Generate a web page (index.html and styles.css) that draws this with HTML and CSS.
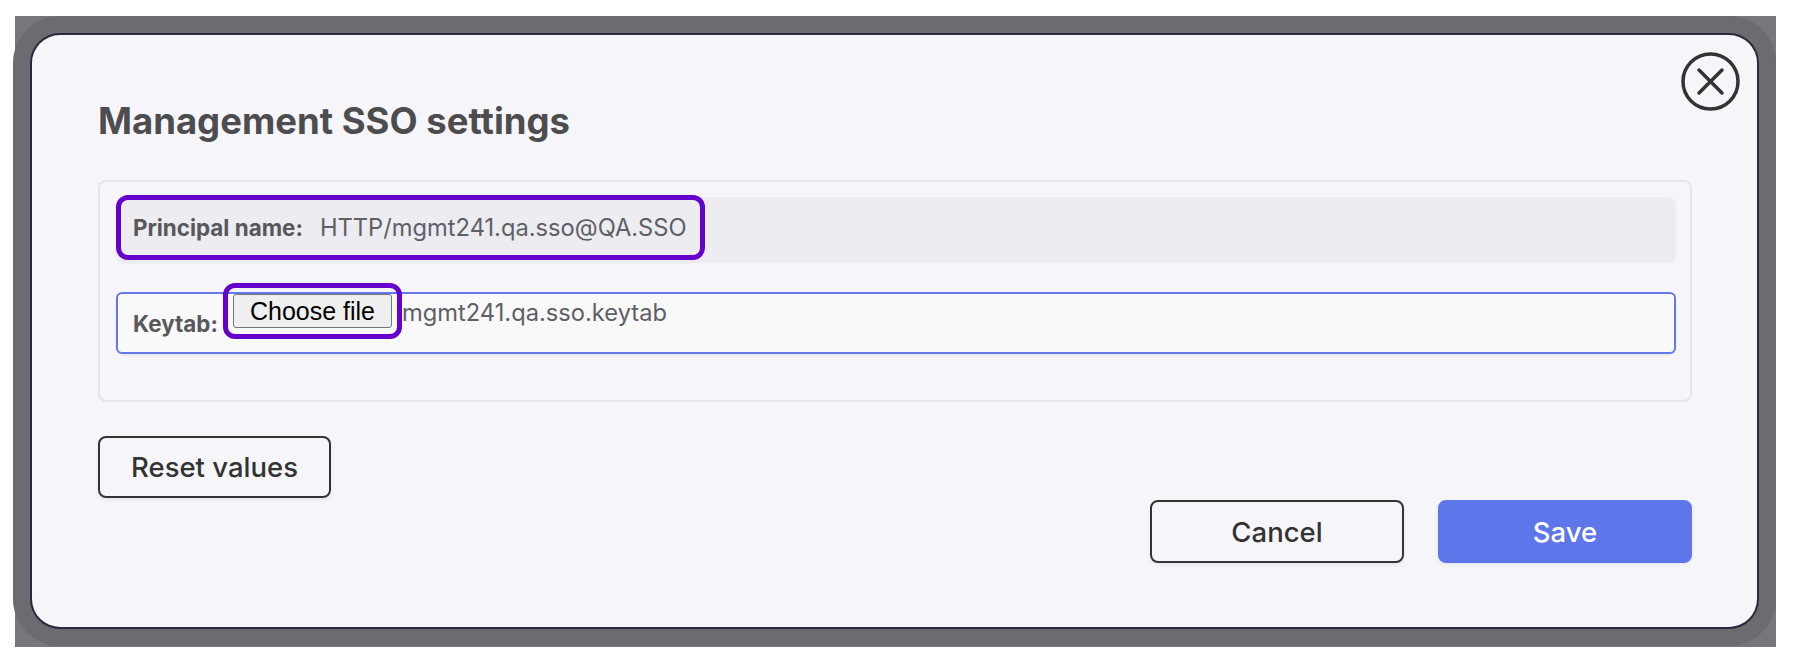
FILE: index.html
```html
<!DOCTYPE html>
<html lang="en">
<head>
    <meta charset="UTF-8">
    <meta name="viewport" content="width=device-width, initial-scale=1.0">
    <title>Management SSO settings</title>
    <link rel="stylesheet" href="styles.css">
</head>
<body>

<div class="backdrop">
    <div class="modal">
        <button class="close-btn" aria-label="Close">
            <svg width="59" height="59" viewBox="0 0 59 59">
                <circle cx="29.5" cy="29.5" r="27.5" fill="none" stroke="#333" stroke-width="3.5"/>
                <path d="M18 18 L41 41 M41 18 L18 41" stroke="#333" stroke-width="3.5" stroke-linecap="round"/>
            </svg>
        </button>

        <h2 class="modal-title">Management SSO settings</h2>

        <section class="settings-box">
            <div class="field-row readonly">
                <div class="highlight">
                    <span class="field-label">Principal name:</span>
                    <span class="field-value">HTTP/mgmt241.qa.sso@QA.SSO</span>
                </div>
            </div>

            <div class="field-row keytab">
                <span class="field-label">Keytab:</span>
                <div class="highlight file-mark">
                    <button class="file-btn">Choose file</button>
                </div>
                <span class="file-name">mgmt241.qa.sso.keytab</span>
            </div>
        </section>

        <button class="btn btn-outline reset-btn">Reset values</button>

        <div class="actions">
            <button class="btn btn-outline">Cancel</button>
            <button class="btn btn-primary">Save</button>
        </div>
    </div>
</div>

</body>
</html>
```

FILE: styles.css
```css
body {
    font-family: Inter, "Noto Sans", sans-serif;
    margin: 0;
    padding: 0;
    background-color: #ffffff;
}
.backdrop {
    margin: 16px 17px 23px 15px;
    padding: 19px 19px 20px 17px;
    background-color: #76777b;
}
.modal {
    position: relative;
    background-color: #f6f6fa;
    border-radius: 28px;
    padding: 64px 65px 64px 66px;
    box-shadow: 0 0 0 2px #2a2a3e, 0 0 0 19px #6b6c70;
}
.close-btn {
    position: absolute;
    top: 17px;
    right: 17px;
    width: 59px;
    height: 59px;
    padding: 0;
    border: none;
    background: none;
    cursor: pointer;
}
.close-btn svg {
    display: block;
}
.modal-title {
    margin: 0 0 36px 0;
    font-size: 36.5px;
    line-height: 45px;
    font-weight: 700;
    color: #4d4d4f;
}
.settings-box {
    border: 2px solid #e4e5eb;
    border-radius: 8px;
    padding: 15px 14px 46px 16px;
}
.field-row {
    display: flex;
    box-sizing: border-box;
    border-radius: 8px;
}
.field-row.readonly {
    height: 64px;
    align-items: flex-start;
    background-color: #ececf1;
    box-shadow: 0 2px 3px rgba(0, 0, 0, 0.05);
}
.highlight {
    display: flex;
    align-items: center;
    box-sizing: border-box;
    border: 5px solid #6600cc;
    border-radius: 12px;
}
.field-row.readonly .highlight {
    height: 65px;
    margin-top: -2px;
    padding: 0 13px 0 12px;
    gap: 17px;
}
.field-label {
    font-size: 22.4px;
    font-weight: 700;
    color: #58585c;
}
.field-value, .file-name {
    font-size: 23.7px;
    color: #5f5f67;
}
.field-row.keytab {
    margin-top: 31px;
    height: 62px;
    align-items: flex-start;
    padding-left: 15px;
    border: 2px solid #6478e8;
    border-radius: 6px;
    background-color: #f9f9f9;
    box-shadow: 0 2px 3px rgba(0, 0, 0, 0.05);
}
.field-row.keytab .field-label {
    align-self: center;
}
.file-mark {
    margin: -11px 0 0 5px;
    padding: 6px 5px;
}
.file-btn {
    height: 34px;
    padding: 0 16px;
    font-family: "Liberation Sans", Arial, sans-serif;
    font-size: 25px;
    color: #000;
    background-color: #efefef;
    border: 1px solid #767676;
    border-radius: 3px;
}
.file-name {
    margin: 4px 0 0 0;
}
.btn {
    height: 62px;
    font-family: Inter, "Noto Sans", sans-serif;
    font-size: 27.5px;
    font-weight: 500;
    border-radius: 8px;
    cursor: pointer;
    box-shadow: 0 2px 4px rgba(0, 0, 0, 0.06);
}
.btn-outline {
    background: transparent;
    border: 2px solid #333;
    color: #333;
}
.btn-primary {
    background-color: #5d77ea;
    border: 2px solid #5d77ea;
    color: #ffffff;
}
.reset-btn {
    display: block;
    width: 233px;
    margin-top: 34px;
}
.actions {
    display: flex;
    justify-content: flex-end;
    gap: 34px;
    margin-top: 2px;
}
.actions .btn {
    width: 254px;
    height: 63px;
}
```
